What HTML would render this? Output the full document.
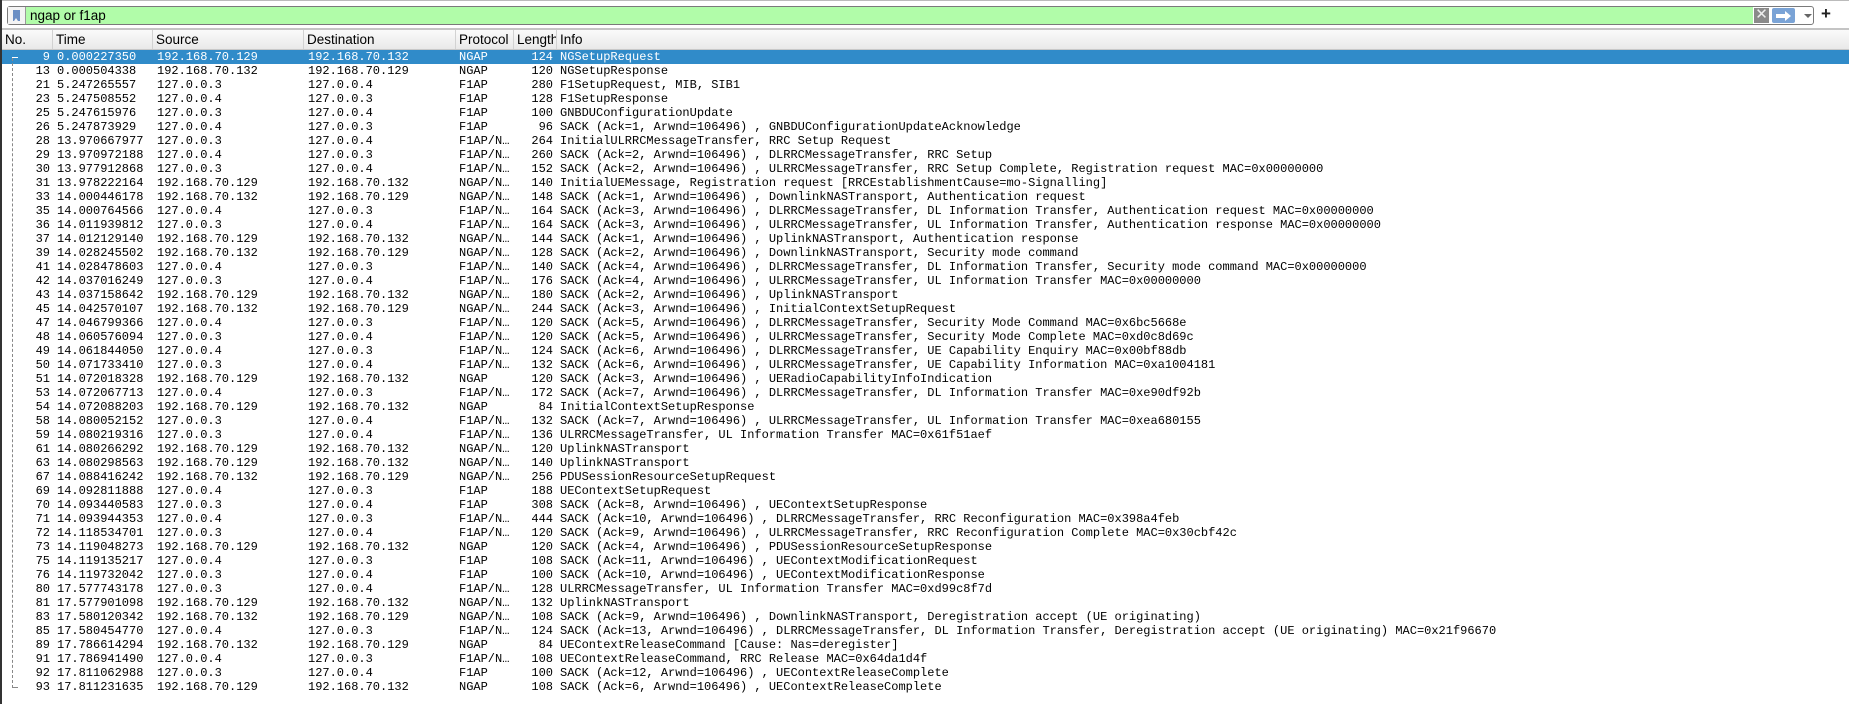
<!DOCTYPE html>
<html><head><meta charset="utf-8"><style>
*{margin:0;padding:0;box-sizing:border-box}
html,body{width:1849px;height:704px;overflow:hidden;background:#fff;position:relative;font-family:"Liberation Sans",sans-serif}
#lb{position:absolute;left:0;top:0;width:2px;height:704px;background:#333}
#tl{position:absolute;left:2px;top:0;right:0;height:1px;background:#bbb}
#fb{position:absolute;left:7px;top:6px;width:1807px;height:19px;border:1px solid #7a7a7a;border-radius:3px;background:#fff}
#bm{position:absolute;left:0;top:0;width:18px;height:17px;border-right:1px solid #999;background:#f4f4f4}
#bm i{position:absolute;left:5px;top:3px;width:7px;height:11px;background:#6b8fc4}
#bm i:after{content:"";position:absolute;left:1px;bottom:0;border-left:2.5px solid transparent;border-right:2.5px solid transparent;border-bottom:3px solid #f4f4f4}
#gr{position:absolute;left:18px;top:0;width:1727px;height:17px;background:#b1fca9;font-size:13.5px;line-height:17px;padding-left:4px;color:#000}
#xb{position:absolute;left:1746px;top:1px;width:15px;height:15px;background:#8a8a8a;color:#eee;font-size:15px;line-height:14px;text-align:center}
#ab{position:absolute;left:1764px;top:1px;width:23px;height:15px;background:#7aa3d6;border-radius:2px}
#ab:before{content:"";position:absolute;left:4px;top:6px;width:9px;height:4px;background:#fff}
#ab:after{content:"";position:absolute;left:13px;top:3px;border-top:5px solid transparent;border-bottom:5px solid transparent;border-left:6px solid #fff}
#dd{position:absolute;left:1796px;top:7px;border-left:4px solid transparent;border-right:4px solid transparent;border-top:4px solid #666}
#pl{position:absolute;left:1821px;top:4px;font-size:17px;font-weight:bold;color:#222}
#sep{position:absolute;left:2px;right:0;top:28px;height:2px;background:#c4c4c4}
#hd{position:absolute;left:2px;right:0;top:30px;height:20px;background:linear-gradient(#fafafa,#e9e9e9);border-bottom:1px solid #c8c8c8;font-size:13.5px;line-height:20px;color:#000}
#hd span{position:absolute;top:0;height:19px;padding-left:3px;border-right:1px solid #d2d2d2;overflow:hidden;white-space:nowrap}
#rows{position:absolute;left:2px;top:50px;right:0;font-family:"Liberation Mono",monospace;font-size:12px;color:#000}
.r{position:relative;height:14px;line-height:14px;white-space:pre}
.r.s{background:#308bc9;color:#fff}
.r span{position:absolute;top:0}
.n{right:auto;left:0;width:48px;text-align:right}
.t{left:55px}.a{left:155px}.d{left:306px}.p{left:457px}
.l{left:512px;width:39px;text-align:right}.i{left:558px}
#tv{position:absolute;left:12px;top:58px;width:1px;height:630px;border-left:1px dashed #888}
#tt{position:absolute;left:12px;top:57px;width:6px;height:1px;background:#fff}
#tb{position:absolute;left:12px;top:687px;width:6px;height:1px;background:#888}
</style></head><body>
<div id="lb"></div><div id="tl"></div>
<div id="fb"><div id="bm"><i></i></div><div id="gr">ngap or f1ap</div><div id="xb">✕</div><div id="ab"></div><div id="dd"></div></div>
<div id="pl">+</div>
<div id="sep"></div>
<div id="hd">
<span style="left:0;width:51px">No.</span>
<span style="left:51px;width:100px">Time</span>
<span style="left:151px;width:151px">Source</span>
<span style="left:302px;width:152px">Destination</span>
<span style="left:454px;width:58px">Protocol</span>
<span style="left:512px;width:43px">Length</span>
<span style="left:555px;width:1290px;border:0">Info</span>
</div>
<div id="rows">
<div class="r s"><span class="n">9</span><span class="t">0.000227350</span><span class="a">192.168.70.129</span><span class="d">192.168.70.132</span><span class="p">NGAP</span><span class="l">124</span><span class="i">NGSetupRequest</span></div>
<div class="r"><span class="n">13</span><span class="t">0.000504338</span><span class="a">192.168.70.132</span><span class="d">192.168.70.129</span><span class="p">NGAP</span><span class="l">120</span><span class="i">NGSetupResponse</span></div>
<div class="r"><span class="n">21</span><span class="t">5.247265557</span><span class="a">127.0.0.3</span><span class="d">127.0.0.4</span><span class="p">F1AP</span><span class="l">280</span><span class="i">F1SetupRequest, MIB, SIB1</span></div>
<div class="r"><span class="n">23</span><span class="t">5.247508552</span><span class="a">127.0.0.4</span><span class="d">127.0.0.3</span><span class="p">F1AP</span><span class="l">128</span><span class="i">F1SetupResponse</span></div>
<div class="r"><span class="n">25</span><span class="t">5.247615976</span><span class="a">127.0.0.3</span><span class="d">127.0.0.4</span><span class="p">F1AP</span><span class="l">100</span><span class="i">GNBDUConfigurationUpdate</span></div>
<div class="r"><span class="n">26</span><span class="t">5.247873929</span><span class="a">127.0.0.4</span><span class="d">127.0.0.3</span><span class="p">F1AP</span><span class="l">96</span><span class="i">SACK (Ack=1, Arwnd=106496) , GNBDUConfigurationUpdateAcknowledge</span></div>
<div class="r"><span class="n">28</span><span class="t">13.970667977</span><span class="a">127.0.0.3</span><span class="d">127.0.0.4</span><span class="p">F1AP/N…</span><span class="l">264</span><span class="i">InitialULRRCMessageTransfer, RRC Setup Request</span></div>
<div class="r"><span class="n">29</span><span class="t">13.970972188</span><span class="a">127.0.0.4</span><span class="d">127.0.0.3</span><span class="p">F1AP/N…</span><span class="l">260</span><span class="i">SACK (Ack=2, Arwnd=106496) , DLRRCMessageTransfer, RRC Setup</span></div>
<div class="r"><span class="n">30</span><span class="t">13.977912868</span><span class="a">127.0.0.3</span><span class="d">127.0.0.4</span><span class="p">F1AP/N…</span><span class="l">152</span><span class="i">SACK (Ack=2, Arwnd=106496) , ULRRCMessageTransfer, RRC Setup Complete, Registration request MAC=0x00000000</span></div>
<div class="r"><span class="n">31</span><span class="t">13.978222164</span><span class="a">192.168.70.129</span><span class="d">192.168.70.132</span><span class="p">NGAP/N…</span><span class="l">140</span><span class="i">InitialUEMessage, Registration request [RRCEstablishmentCause=mo-Signalling]</span></div>
<div class="r"><span class="n">33</span><span class="t">14.000446178</span><span class="a">192.168.70.132</span><span class="d">192.168.70.129</span><span class="p">NGAP/N…</span><span class="l">148</span><span class="i">SACK (Ack=1, Arwnd=106496) , DownlinkNASTransport, Authentication request</span></div>
<div class="r"><span class="n">35</span><span class="t">14.000764566</span><span class="a">127.0.0.4</span><span class="d">127.0.0.3</span><span class="p">F1AP/N…</span><span class="l">164</span><span class="i">SACK (Ack=3, Arwnd=106496) , DLRRCMessageTransfer, DL Information Transfer, Authentication request MAC=0x00000000</span></div>
<div class="r"><span class="n">36</span><span class="t">14.011939812</span><span class="a">127.0.0.3</span><span class="d">127.0.0.4</span><span class="p">F1AP/N…</span><span class="l">164</span><span class="i">SACK (Ack=3, Arwnd=106496) , ULRRCMessageTransfer, UL Information Transfer, Authentication response MAC=0x00000000</span></div>
<div class="r"><span class="n">37</span><span class="t">14.012129140</span><span class="a">192.168.70.129</span><span class="d">192.168.70.132</span><span class="p">NGAP/N…</span><span class="l">144</span><span class="i">SACK (Ack=1, Arwnd=106496) , UplinkNASTransport, Authentication response</span></div>
<div class="r"><span class="n">39</span><span class="t">14.028245502</span><span class="a">192.168.70.132</span><span class="d">192.168.70.129</span><span class="p">NGAP/N…</span><span class="l">128</span><span class="i">SACK (Ack=2, Arwnd=106496) , DownlinkNASTransport, Security mode command</span></div>
<div class="r"><span class="n">41</span><span class="t">14.028478603</span><span class="a">127.0.0.4</span><span class="d">127.0.0.3</span><span class="p">F1AP/N…</span><span class="l">140</span><span class="i">SACK (Ack=4, Arwnd=106496) , DLRRCMessageTransfer, DL Information Transfer, Security mode command MAC=0x00000000</span></div>
<div class="r"><span class="n">42</span><span class="t">14.037016249</span><span class="a">127.0.0.3</span><span class="d">127.0.0.4</span><span class="p">F1AP/N…</span><span class="l">176</span><span class="i">SACK (Ack=4, Arwnd=106496) , ULRRCMessageTransfer, UL Information Transfer MAC=0x00000000</span></div>
<div class="r"><span class="n">43</span><span class="t">14.037158642</span><span class="a">192.168.70.129</span><span class="d">192.168.70.132</span><span class="p">NGAP/N…</span><span class="l">180</span><span class="i">SACK (Ack=2, Arwnd=106496) , UplinkNASTransport</span></div>
<div class="r"><span class="n">45</span><span class="t">14.042570107</span><span class="a">192.168.70.132</span><span class="d">192.168.70.129</span><span class="p">NGAP/N…</span><span class="l">244</span><span class="i">SACK (Ack=3, Arwnd=106496) , InitialContextSetupRequest</span></div>
<div class="r"><span class="n">47</span><span class="t">14.046799366</span><span class="a">127.0.0.4</span><span class="d">127.0.0.3</span><span class="p">F1AP/N…</span><span class="l">120</span><span class="i">SACK (Ack=5, Arwnd=106496) , DLRRCMessageTransfer, Security Mode Command MAC=0x6bc5668e</span></div>
<div class="r"><span class="n">48</span><span class="t">14.060576094</span><span class="a">127.0.0.3</span><span class="d">127.0.0.4</span><span class="p">F1AP/N…</span><span class="l">120</span><span class="i">SACK (Ack=5, Arwnd=106496) , ULRRCMessageTransfer, Security Mode Complete MAC=0xd0c8d69c</span></div>
<div class="r"><span class="n">49</span><span class="t">14.061844050</span><span class="a">127.0.0.4</span><span class="d">127.0.0.3</span><span class="p">F1AP/N…</span><span class="l">124</span><span class="i">SACK (Ack=6, Arwnd=106496) , DLRRCMessageTransfer, UE Capability Enquiry MAC=0x00bf88db</span></div>
<div class="r"><span class="n">50</span><span class="t">14.071733410</span><span class="a">127.0.0.3</span><span class="d">127.0.0.4</span><span class="p">F1AP/N…</span><span class="l">132</span><span class="i">SACK (Ack=6, Arwnd=106496) , ULRRCMessageTransfer, UE Capability Information MAC=0xa1004181</span></div>
<div class="r"><span class="n">51</span><span class="t">14.072018328</span><span class="a">192.168.70.129</span><span class="d">192.168.70.132</span><span class="p">NGAP</span><span class="l">120</span><span class="i">SACK (Ack=3, Arwnd=106496) , UERadioCapabilityInfoIndication</span></div>
<div class="r"><span class="n">53</span><span class="t">14.072067713</span><span class="a">127.0.0.4</span><span class="d">127.0.0.3</span><span class="p">F1AP/N…</span><span class="l">172</span><span class="i">SACK (Ack=7, Arwnd=106496) , DLRRCMessageTransfer, DL Information Transfer MAC=0xe90df92b</span></div>
<div class="r"><span class="n">54</span><span class="t">14.072088203</span><span class="a">192.168.70.129</span><span class="d">192.168.70.132</span><span class="p">NGAP</span><span class="l">84</span><span class="i">InitialContextSetupResponse</span></div>
<div class="r"><span class="n">58</span><span class="t">14.080052152</span><span class="a">127.0.0.3</span><span class="d">127.0.0.4</span><span class="p">F1AP/N…</span><span class="l">132</span><span class="i">SACK (Ack=7, Arwnd=106496) , ULRRCMessageTransfer, UL Information Transfer MAC=0xea680155</span></div>
<div class="r"><span class="n">59</span><span class="t">14.080219316</span><span class="a">127.0.0.3</span><span class="d">127.0.0.4</span><span class="p">F1AP/N…</span><span class="l">136</span><span class="i">ULRRCMessageTransfer, UL Information Transfer MAC=0x61f51aef</span></div>
<div class="r"><span class="n">61</span><span class="t">14.080266292</span><span class="a">192.168.70.129</span><span class="d">192.168.70.132</span><span class="p">NGAP/N…</span><span class="l">120</span><span class="i">UplinkNASTransport</span></div>
<div class="r"><span class="n">63</span><span class="t">14.080298563</span><span class="a">192.168.70.129</span><span class="d">192.168.70.132</span><span class="p">NGAP/N…</span><span class="l">140</span><span class="i">UplinkNASTransport</span></div>
<div class="r"><span class="n">67</span><span class="t">14.088416242</span><span class="a">192.168.70.132</span><span class="d">192.168.70.129</span><span class="p">NGAP/N…</span><span class="l">256</span><span class="i">PDUSessionResourceSetupRequest</span></div>
<div class="r"><span class="n">69</span><span class="t">14.092811888</span><span class="a">127.0.0.4</span><span class="d">127.0.0.3</span><span class="p">F1AP</span><span class="l">188</span><span class="i">UEContextSetupRequest</span></div>
<div class="r"><span class="n">70</span><span class="t">14.093440583</span><span class="a">127.0.0.3</span><span class="d">127.0.0.4</span><span class="p">F1AP</span><span class="l">308</span><span class="i">SACK (Ack=8, Arwnd=106496) , UEContextSetupResponse</span></div>
<div class="r"><span class="n">71</span><span class="t">14.093944353</span><span class="a">127.0.0.4</span><span class="d">127.0.0.3</span><span class="p">F1AP/N…</span><span class="l">444</span><span class="i">SACK (Ack=10, Arwnd=106496) , DLRRCMessageTransfer, RRC Reconfiguration MAC=0x398a4feb</span></div>
<div class="r"><span class="n">72</span><span class="t">14.118534701</span><span class="a">127.0.0.3</span><span class="d">127.0.0.4</span><span class="p">F1AP/N…</span><span class="l">120</span><span class="i">SACK (Ack=9, Arwnd=106496) , ULRRCMessageTransfer, RRC Reconfiguration Complete MAC=0x30cbf42c</span></div>
<div class="r"><span class="n">73</span><span class="t">14.119048273</span><span class="a">192.168.70.129</span><span class="d">192.168.70.132</span><span class="p">NGAP</span><span class="l">120</span><span class="i">SACK (Ack=4, Arwnd=106496) , PDUSessionResourceSetupResponse</span></div>
<div class="r"><span class="n">75</span><span class="t">14.119135217</span><span class="a">127.0.0.4</span><span class="d">127.0.0.3</span><span class="p">F1AP</span><span class="l">108</span><span class="i">SACK (Ack=11, Arwnd=106496) , UEContextModificationRequest</span></div>
<div class="r"><span class="n">76</span><span class="t">14.119732042</span><span class="a">127.0.0.3</span><span class="d">127.0.0.4</span><span class="p">F1AP</span><span class="l">100</span><span class="i">SACK (Ack=10, Arwnd=106496) , UEContextModificationResponse</span></div>
<div class="r"><span class="n">80</span><span class="t">17.577743178</span><span class="a">127.0.0.3</span><span class="d">127.0.0.4</span><span class="p">F1AP/N…</span><span class="l">128</span><span class="i">ULRRCMessageTransfer, UL Information Transfer MAC=0xd99c8f7d</span></div>
<div class="r"><span class="n">81</span><span class="t">17.577901098</span><span class="a">192.168.70.129</span><span class="d">192.168.70.132</span><span class="p">NGAP/N…</span><span class="l">132</span><span class="i">UplinkNASTransport</span></div>
<div class="r"><span class="n">83</span><span class="t">17.580120342</span><span class="a">192.168.70.132</span><span class="d">192.168.70.129</span><span class="p">NGAP/N…</span><span class="l">108</span><span class="i">SACK (Ack=9, Arwnd=106496) , DownlinkNASTransport, Deregistration accept (UE originating)</span></div>
<div class="r"><span class="n">85</span><span class="t">17.580454770</span><span class="a">127.0.0.4</span><span class="d">127.0.0.3</span><span class="p">F1AP/N…</span><span class="l">124</span><span class="i">SACK (Ack=13, Arwnd=106496) , DLRRCMessageTransfer, DL Information Transfer, Deregistration accept (UE originating) MAC=0x21f96670</span></div>
<div class="r"><span class="n">89</span><span class="t">17.786614294</span><span class="a">192.168.70.132</span><span class="d">192.168.70.129</span><span class="p">NGAP</span><span class="l">84</span><span class="i">UEContextReleaseCommand [Cause: Nas=deregister]</span></div>
<div class="r"><span class="n">91</span><span class="t">17.786941490</span><span class="a">127.0.0.4</span><span class="d">127.0.0.3</span><span class="p">F1AP/N…</span><span class="l">108</span><span class="i">UEContextReleaseCommand, RRC Release MAC=0x64da1d4f</span></div>
<div class="r"><span class="n">92</span><span class="t">17.811062988</span><span class="a">127.0.0.3</span><span class="d">127.0.0.4</span><span class="p">F1AP</span><span class="l">100</span><span class="i">SACK (Ack=12, Arwnd=106496) , UEContextReleaseComplete</span></div>
<div class="r"><span class="n">93</span><span class="t">17.811231635</span><span class="a">192.168.70.129</span><span class="d">192.168.70.132</span><span class="p">NGAP</span><span class="l">108</span><span class="i">SACK (Ack=6, Arwnd=106496) , UEContextReleaseComplete</span></div>
</div>
<div id="tv"></div><div id="tt"></div><div id="tb"></div>
</body></html>
